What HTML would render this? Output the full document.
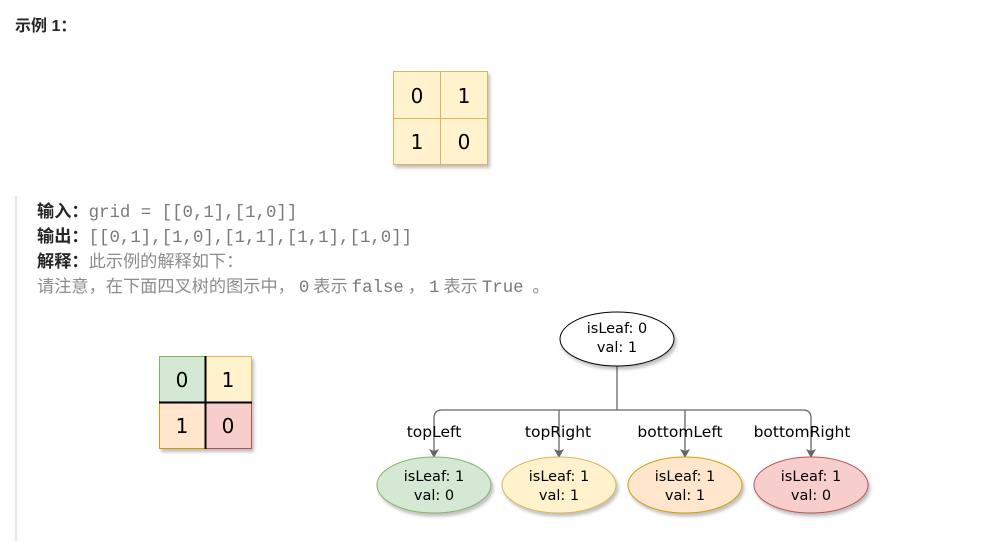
<!DOCTYPE html>
<html><head><meta charset="utf-8"><style>
body{margin:0;width:1006px;height:541px;background:#fff;position:relative;overflow:hidden;font-family:"Liberation Sans","Noto Sans CJK SC",sans-serif;}
.h{position:absolute;left:15px;top:12px;font-weight:bold;font-size:16px;color:#262626;}
.bq{position:absolute;left:15px;top:196px;width:2px;height:345px;background:#e6e6e6;}
.t{position:absolute;left:37px;font-size:17.2px;color:#8c8c8c;line-height:25px;white-space:nowrap;}
.t b{color:#262626;}
.m{font-family:"Liberation Mono",monospace;font-size:17.4px;color:#7a7a7a;}
.p{margin:0 4px;}
svg{position:absolute;left:0;top:0;}
svg text{font-family:"Comic Sans MS","DejaVu Sans",sans-serif;}
</style></head><body>
<div class="h">示例 1：</div>
<div class="bq"></div>
<div class="t" style="top:199px"><b>输入：</b><span class="m">grid = [[0,1],[1,0]]</span></div>
<div class="t" style="top:224px"><b>输出：</b><span class="m">[[0,1],[1,0],[1,1],[1,1],[1,0]]</span></div>
<div class="t" style="top:249px"><b>解释：</b>此示例的解释如下：</div>
<div class="t" style="top:274px">请注意，在下面四叉树的图示中，<span class="m p">0</span>表示<span class="m p">false</span>，<span class="m p">1</span>表示<span class="m p">True</span> 。</div>
<svg width="1006" height="541">
<defs><filter id="s"><feDropShadow dx="2" dy="3" stdDeviation="1.5" flood-color="#000" flood-opacity="0.25"/></filter></defs>
<g filter="url(#s)">
<rect x="393.5" y="71.5" width="94" height="93" fill="#fff2cc" stroke="#d6b656"/>
</g>
<line x1="440.5" y1="71" x2="440.5" y2="165" stroke="#d6b656"/>
<line x1="393" y1="118.5" x2="488" y2="118.5" stroke="#d6b656"/>
<g font-size="20" text-anchor="middle" fill="#000">
<text x="417" y="103">0</text><text x="464" y="103">1</text>
<text x="417" y="149">1</text><text x="464" y="149">0</text>
</g>
<g filter="url(#s)">
<rect x="159.5" y="356.5" width="46" height="46" fill="#d5e8d4" stroke="#82b366"/>
<rect x="205.5" y="356.5" width="46" height="46" fill="#fff2cc" stroke="#d6b656"/>
<rect x="159.5" y="402.5" width="46" height="46" fill="#ffe6cc" stroke="#d79b00"/>
<rect x="205.5" y="402.5" width="46" height="46" fill="#f8cecc" stroke="#b85450"/>
</g>
<line x1="205.5" y1="356" x2="205.5" y2="449" stroke="#000" stroke-width="2"/>
<line x1="159" y1="402.5" x2="252" y2="402.5" stroke="#000" stroke-width="2"/>
<g font-size="20" text-anchor="middle" fill="#000">
<text x="182" y="387">0</text><text x="228" y="387">1</text>
<text x="182" y="433">1</text><text x="228" y="433">0</text>
</g>
<g stroke="#666" stroke-width="1.3" fill="none">
<line x1="617" y1="366" x2="617" y2="410"/>
<path d="M434 452 V418 Q434 410 442 410 H803 Q811 410 811 418 V452"/>
<line x1="559" y1="410" x2="559" y2="452"/>
<line x1="685" y1="410" x2="685" y2="452"/>
</g>
<g fill="#666">
<path d="M429 449 L434 458 L439 449 L434 451Z"/>
<path d="M554 449 L559 458 L564 449 L559 451Z"/>
<path d="M680 449 L685 458 L690 449 L685 451Z"/>
<path d="M806 449 L811 458 L816 449 L811 451Z"/>
</g>
<g font-size="15.5" text-anchor="middle" fill="#000">
<text x="434" y="437">topLeft</text><text x="558" y="437">topRight</text>
<text x="680" y="437">bottomLeft</text><text x="802" y="437">bottomRight</text>
</g>
<g filter="url(#s)">
<ellipse cx="617" cy="339" rx="57" ry="27" fill="#fff" stroke="#000"/>
<ellipse cx="434" cy="485" rx="57" ry="28" fill="#d5e8d4" stroke="#82b366"/>
<ellipse cx="559" cy="485" rx="57" ry="28" fill="#fff2cc" stroke="#d6b656"/>
<ellipse cx="685" cy="485" rx="57" ry="28" fill="#ffe6cc" stroke="#d79b00"/>
<ellipse cx="811" cy="485" rx="57" ry="28" fill="#f8cecc" stroke="#b85450"/>
</g>
<g font-size="14.5" text-anchor="middle" fill="#000">
<text x="617" y="333">isLeaf: 0</text><text x="617" y="352">val: 1</text>
<text x="434" y="481">isLeaf: 1</text><text x="434" y="500">val: 0</text>
<text x="559" y="481">isLeaf: 1</text><text x="559" y="500">val: 1</text>
<text x="685" y="481">isLeaf: 1</text><text x="685" y="500">val: 1</text>
<text x="811" y="481">isLeaf: 1</text><text x="811" y="500">val: 0</text>
</g>
</svg>
</body></html>
